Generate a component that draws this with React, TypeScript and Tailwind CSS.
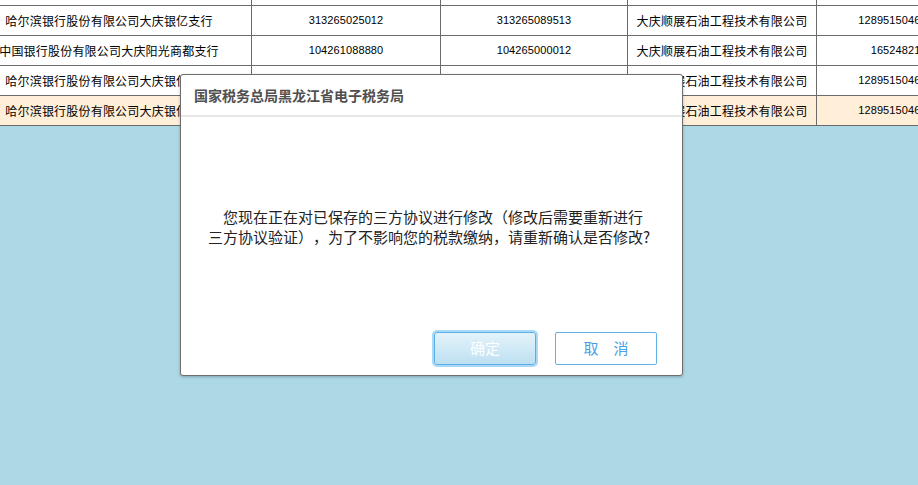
import React from "react";

type Row = {
    bank: string;
    bankNo: string;
    payNo: string;
    corp: string;
    acct: string;
    active?: boolean;
};

const rows: Row[] = [
    { bank: "", bankNo: "", payNo: "", corp: "", acct: "" },
    {
        bank: "哈尔滨银行股份有限公司大庆银亿支行",
        bankNo: "313265025012",
        payNo: "313265089513",
        corp: "大庆顺展石油工程技术有限公司",
        acct: "1289515046000123",
    },
    {
        bank: "中国银行股份有限公司大庆阳光商都支行",
        bankNo: "104261088880",
        payNo: "104265000012",
        corp: "大庆顺展石油工程技术有限公司",
        acct: "165248210567",
    },
    {
        bank: "哈尔滨银行股份有限公司大庆银亿支行",
        bankNo: "313265025012",
        payNo: "313265089513",
        corp: "大庆顺展石油工程技术有限公司",
        acct: "1289515046000123",
    },
    {
        bank: "哈尔滨银行股份有限公司大庆银亿支行",
        bankNo: "313265025012",
        payNo: "313265089513",
        corp: "大庆顺展石油工程技术有限公司",
        acct: "1289515046000123",
        active: true,
    },
];

const cjk = "font-['Noto_Sans_CJK_SC',sans-serif] [text-spacing-trim:space-all]";
const num = "font-['Liberation_Sans',sans-serif] text-[11px] tracking-[0.1px]";

const App = () => {
    return (
        <div className={`relative h-screen w-full overflow-hidden bg-[#add8e6] ${cjk}`}>
            {/* table, scrolled a bit to the left */}
            <div className="mt-[-24px] ml-[-35px] w-max">
                {rows.map((r, i) => (
                    <div
                        key={i}
                        className={`flex h-[30px] border-b border-[#6b6b6b] text-[12px] tracking-[0.2px] text-black ${
                            r.active ? "bg-[#ffeed8]" : "bg-white"
                        }`}
                    >
                        <div className="flex w-[287px] items-center justify-center whitespace-nowrap border-r border-[#6b6b6b] pl-[2px]">
                            {r.bank}
                        </div>
                        <div className={`flex w-[189px] items-center justify-center border-r border-[#6b6b6b] ${num}`}>
                            {r.bankNo}
                        </div>
                        <div className={`flex w-[187px] items-center justify-center border-r border-[#6b6b6b] ${num}`}>
                            {r.payNo}
                        </div>
                        <div className="flex w-[189px] items-center justify-center whitespace-nowrap border-r border-[#6b6b6b]">
                            {r.corp}
                        </div>
                        <div className={`flex w-[182px] items-center justify-center ${num}`}>
                            {r.acct}
                        </div>
                    </div>
                ))}
            </div>

            {/* confirm dialog */}
            <div className="absolute left-[180px] top-[74px] flex h-[302px] w-[503px] flex-col rounded-[3px] border border-[#6e6e6e] bg-white shadow-[0_1px_3px_rgba(0,0,0,0.25)]">
                <div className="flex h-[40px] items-center pl-[13px] text-[14px] font-bold text-[#505050]">
                    国家税务总局黑龙江省电子税务局
                </div>
                <div className="h-[2px] bg-[#e8e8e8]" />

                <p className="mt-[90px] pl-[27px] indent-[15px] text-[15px] leading-[20px] text-[#222]">
                    您现在正在对已保存的三方协议进行修改（修改后需要重新进行
                    <br />
                    三方协议验证），为了不影响您的税款缴纳，请重新确认是否修改?
                </p>

                <div className="mt-auto flex justify-end gap-[19px] pb-[10px] pr-[25px]">
                    <button className="h-[33px] w-[102px] rounded-[3px] border border-[#5aaee6] bg-linear-to-b from-[#e4f3fb] to-[#bde0f2] text-[15px] text-white ring-2 ring-[#a9d9f6]">
                        确定
                    </button>
                    <button className="h-[33px] w-[102px] rounded-[2px] border border-[#62b2ea] bg-white text-[15px] text-[#4aa0e4]">
                        取　消
                    </button>
                </div>
            </div>
        </div>
    );
};

export default App;
